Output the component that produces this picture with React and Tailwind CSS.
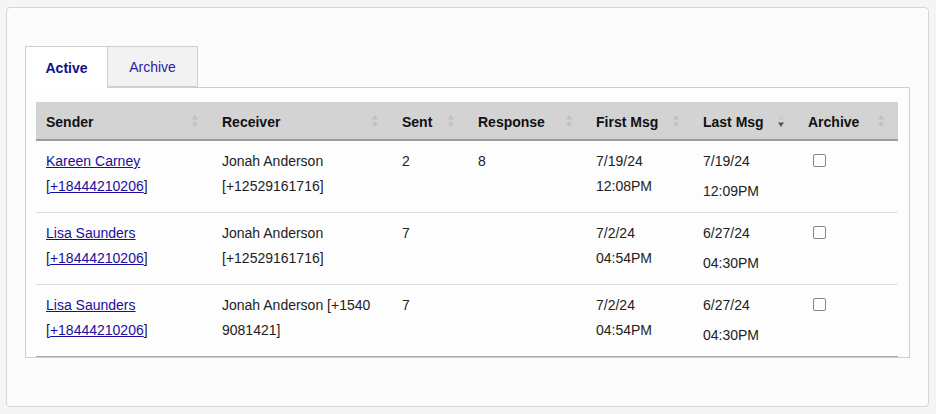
import React from 'react';

const columns = [
  { label: 'Sender', width: 176 },
  { label: 'Receiver', width: 180 },
  { label: 'Sent', width: 76 },
  { label: 'Response', width: 118 },
  { label: 'First Msg', width: 107 },
  { label: 'Last Msg', width: 105, sorted: true },
  { label: 'Archive', width: 100 },
];

const rows = [
  {
    sender: 'Kareen Carney',
    receiver: ['Jonah Anderson', '[+12529161716]'],
    sent: '2',
    response: '8',
    first: ['7/19/24', '12:08PM'],
    last: ['7/19/24', '12:09PM'],
  },
  {
    sender: 'Lisa Saunders',
    receiver: ['Jonah Anderson', '[+12529161716]'],
    sent: '7',
    response: '',
    first: ['7/2/24', '04:54PM'],
    last: ['6/27/24', '04:30PM'],
  },
  {
    sender: 'Lisa Saunders',
    receiver: ['Jonah Anderson [+1540', '9081421]'],
    sent: '7',
    response: '',
    first: ['7/2/24', '04:54PM'],
    last: ['6/27/24', '04:30PM'],
  },
];

function SortIcon({ sorted }) {
  return (
    <svg width="8" height="12" viewBox="0 0 8 12" className="absolute right-[13px] top-[13px]">
      <path d="M4 0 L7 4.5 L1 4.5 Z" fill={sorted ? '#cacaca' : '#bfbfbf'} />
      <path d="M1 7.5 L7 7.5 L4 12 Z" fill={sorted ? '#555555' : '#bfbfbf'} />
    </svg>
  );
}

function Cell({ children }) {
  return <td className="px-[10px] pt-[8px] pb-[8px] align-top leading-[25px]">{children}</td>;
}

export default function App() {
  return (
    <div
      className="min-h-screen bg-[#f5f5f5] pt-[7px] px-[6px] text-[14px] text-[#222]"
      style={{ fontFamily: '"Liberation Sans", Arial, sans-serif' }}
    >
      <div className="h-[400px] w-[923px] rounded-[4px] border border-[#d6d6d6] bg-[#fcfcfc] pt-[38px] pl-[18px]">
        <div className="flex w-[885px]">
          <div className="relative z-10 -mb-px flex h-[42px] w-[83px] items-center justify-center border border-b-0 border-[#cfcfcf] bg-white pt-[1px] font-bold text-[#120c8c]">
            Active
          </div>
          <div className="flex h-[41px] w-[90px] items-center justify-center border border-l-0 border-[#cfcfcf] bg-[#f2f2f2] pt-[1px] text-[#2a1aa8]">
            Archive
          </div>
        </div>
        <div className="w-[885px] border border-[#cfcfcf] bg-[#fdfdfd] pt-[14px] pl-[10px]">
          <table className="w-[862px] table-fixed border-collapse border-b border-[#acacac]">
            <colgroup>
              {columns.map((c) => (
                <col key={c.label} style={{ width: c.width }} />
              ))}
            </colgroup>
            <thead>
              <tr className="h-[38px] border-b-2 border-[#9c9c9c] bg-[#d3d3d3]">
                {columns.map((c) => (
                  <th key={c.label} className="relative px-[10px] pt-[3px] text-left font-bold text-[#111]">
                    {c.label}
                    <SortIcon sorted={c.sorted} />
                  </th>
                ))}
              </tr>
            </thead>
            <tbody>
              {rows.map((r, i) => (
                <tr key={i} className={`h-[72px] ${i > 0 ? 'border-t border-[#dedede]' : ''}`}>
                  <Cell>
                    <a href="#" className="text-[#1a0f9c] underline">
                      {r.sender}
                    </a>
                    <div>
                      [<a href="#" className="text-[#1a0f9c] underline">+18444210206</a>]
                    </div>
                  </Cell>
                  <Cell>
                    <div>{r.receiver[0]}</div>
                    <div>{r.receiver[1]}</div>
                  </Cell>
                  <Cell>{r.sent}</Cell>
                  <Cell>{r.response}</Cell>
                  <Cell>
                    <div>{r.first[0]}</div>
                    <div>{r.first[1]}</div>
                  </Cell>
                  <Cell>
                    <div>{r.last[0]}</div>
                    <div className="mt-[5px]">{r.last[1]}</div>
                  </Cell>
                  <td className="px-[10px] pt-[13px] align-top">
                    <input
                      type="checkbox"
                      className="ml-[5px] block h-[13px] w-[13px] appearance-none rounded-[2px] border border-[#858585] bg-white"
                    />
                  </td>
                </tr>
              ))}
            </tbody>
          </table>
        </div>
      </div>
    </div>
  );
}
